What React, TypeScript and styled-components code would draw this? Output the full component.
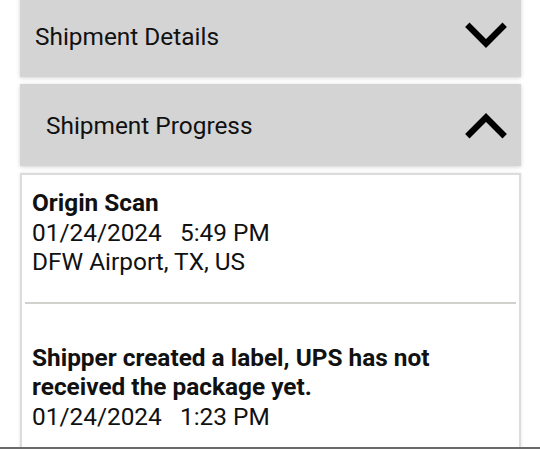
import React from "react";
import styled, { createGlobalStyle } from "styled-components";

const Global = createGlobalStyle`
  html, body { margin: 0; padding: 0; background: #ffffff; overflow: hidden; }
  body { font-family: Roboto, "Liberation Sans", Arial, sans-serif; color: #111; }
`;

const Page = styled.div`
  display: flex;
  flex-direction: column;
  gap: 7px;
  padding: 0 19px 0 20px;
  margin-top: -5px;
`;

const Header = styled.div<{ $indent: number }>`
  height: 82px;
  background: #d4d4d4;
  box-shadow: 0 1px 4px rgba(0, 0, 0, 0.18);
  display: flex;
  align-items: center;
  justify-content: space-between;
  padding: 0 14px 0 ${(p) => p.$indent}px;
  font-size: 24.4px;
  font-weight: 400;
  color: #111;
`;

const Title = styled.span``;

const Chevron = ({ up }: { up?: boolean }) => (
  <svg width="42" height="28" viewBox="0 0 42 28" style={{ display: "block" }}>
    <polyline
      points={up ? "4.5,23 21,6.5 37.5,23" : "4.5,5 21,21.5 37.5,5"}
      fill="none"
      stroke="#000"
      strokeWidth="6.2"
      strokeLinecap="square"
      strokeLinejoin="miter"
    />
  </svg>
);

const Card = styled.div`
  border: 2px solid #dcdcdc;
  border-bottom: none;
  box-shadow: 0 0 3px rgba(0, 0, 0, 0.12);
  background: #fff;
  padding: 0 3px;
`;

const Item = styled.div<{ $top: number; $bottom: number }>`
  padding: ${(p) => p.$top}px 8px ${(p) => p.$bottom}px 7px;
  font-size: 24.4px;
  line-height: 29.5px;
`;

const Status = styled.div`
  font-weight: 700;
`;

const Line = styled.div`
  white-space: pre;
`;

const Divider = styled.div`
  height: 2px;
  background: #d2d0cb;
`;

const BottomEdge = styled.div`
  position: fixed;
  left: 0;
  right: 0;
  bottom: 0;
  height: 2px;
  background: #6a6a6a;
`;

export default function App() {
  return (
    <>
      <Global />
      <Page>
        <Header $indent={15}>
          <Title>Shipment Details</Title>
          <Chevron />
        </Header>
        <Header $indent={26}>
          <Title>Shipment Progress</Title>
          <Chevron up />
        </Header>
        <Card>
          <Item $top={13} $bottom={25}>
            <Status>Origin Scan</Status>
            <Line>01/24/2024   5:49 PM</Line>
            <Line>DFW Airport, TX, US</Line>
          </Item>
          <Divider />
          <Item $top={39} $bottom={20}>
            <Status>Shipper created a label, UPS has not received the package yet.</Status>
            <Line>01/24/2024   1:23 PM</Line>
          </Item>
        </Card>
      </Page>
      <BottomEdge />
    </>
  );
}
